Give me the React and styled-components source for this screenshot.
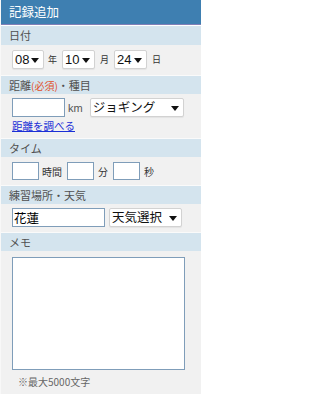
import styled, { createGlobalStyle } from "styled-components";

const GlobalStyle = createGlobalStyle`
  html, body {
    margin: 0;
    padding: 0;
    background: #ffffff;
  }
  body {
    font-family: "Noto Sans CJK JP", "Liberation Sans", sans-serif;
  }
`;

const Panel = styled.div`
  width: 201px;
  height: 394px;
  background: #f1f1f1;
  display: flex;
  flex-direction: column;
  box-sizing: border-box;
  border-left: 1px solid #f8f8f8;
`;

const TitleBar = styled.div`
  height: 24px;
  background: #3e7fb1;
  color: #ffffff;
  font-size: 12.5px;
  line-height: 24px;
  padding-left: 8px;
  border-bottom: 1px solid #7f7fb6;
  box-shadow: 0 1px 0 #ffffff;
  margin-bottom: 1px;
`;

const Header = styled.div`
  box-sizing: border-box;
  height: 19px;
  background: #d4e4ee;
  color: #505050;
  font-size: 11px;
  line-height: 18px;
  padding-left: 8px;
  border-top: ${(p) => (p.$first ? "0" : "1px solid #fafafa")};
`;

const Required = styled.span`
  color: #e0502a;
  font-size: 10px;
`;

const Body = styled.div`
  padding: ${(p) => p.$pad || "5px 0 6px 11px"};
  display: flex;
  flex-direction: column;
  gap: 2px;
`;

const Row = styled.div`
  display: flex;
  align-items: center;
  gap: ${(p) => p.$gap || "0"};
  height: ${(p) => p.$h || 19}px;
`;

const Unit = styled.span`
  font-size: ${(p) => p.$fs || 9}px;
  color: #333333;
  margin: ${(p) => p.$m || "0"};
  white-space: nowrap;
`;

const SelectBox = styled.div`
  box-sizing: border-box;
  width: ${(p) => p.$w}px;
  height: 19px;
  background: #ffffff;
  border: 1px solid #d2d2d2;
  border-radius: 2px;
  box-shadow: 0 1px 1px rgba(0, 0, 0, 0.06);
  display: flex;
  align-items: center;
  justify-content: space-between;
  padding: 0 4px 0 2px;
  font-family: ${(p) =>
    p.$num ? '"Liberation Sans", sans-serif' : '"Noto Sans CJK JP", sans-serif'};
  font-size: ${(p) => p.$fs || 12.5}px;
  color: #111111;
  line-height: 1;
  white-space: nowrap;
  overflow: hidden;
  flex-shrink: 0;
`;

const Arrow = styled.span`
  flex-shrink: 0;
  width: 0;
  height: 0;
  border-left: 4px solid transparent;
  border-right: 4px solid transparent;
  border-top: 5px solid #111111;
  margin-top: 1px;
`;

const Input = styled.div`
  box-sizing: border-box;
  flex-shrink: 0;
  width: ${(p) => p.$w}px;
  height: ${(p) => p.$h || 19}px;
  background: #ffffff;
  border: 1px solid #7f9db9;
  font-size: 12.5px;
  line-height: 17px;
  color: #000000;
  padding-left: 1px;
`;

const Km = styled.span`
  font-family: "Liberation Sans", sans-serif;
  font-size: 11px;
  color: #555555;
  margin: 0 7px 0 3px;
`;

const Link = styled.a`
  font-size: 10.5px;
  color: #1a2fd6;
  text-decoration: underline;
  line-height: 13px;
  align-self: flex-start;
`;

const Memo = styled.div`
  box-sizing: border-box;
  width: 173px;
  height: 113px;
  background: #ffffff;
  border: 1px solid #7f9db9;
  margin-top: 1px;
`;

const Note = styled.div`
  font-size: 10px;
  line-height: 14px;
  color: #666666;
  padding: 3px 0 0 6px;
`;

function Select({ w, children, num, fs }) {
  return (
    <SelectBox $w={w} $num={num} $fs={fs}>
      <span>{children}</span>
      <Arrow />
    </SelectBox>
  );
}

export default function App() {
  return (
    <>
      <GlobalStyle />
      <Panel>
        <TitleBar>記録追加</TitleBar>

        <Header $first>日付</Header>
        <Body $pad="5px 0 6px 11px">
          <Row>
            <Select w={32} num fs={13}>08</Select>
            <Unit $m="0 5px 0 4px">年</Unit>
            <Select w={33} num fs={13}>10</Select>
            <Unit $m="0 5px 0 5px">月</Unit>
            <Select w={33} num fs={13}>24</Select>
            <Unit $m="0 0 0 5px">日</Unit>
          </Row>
        </Body>

        <Header>
          距離<Required>(必須)</Required>・種目
        </Header>
        <Body $pad="4px 0 6px 11px">
          <Row>
            <Input $w={53} />
            <Km>km</Km>
            <Select w={94}>ジョギング</Select>
          </Row>
          <Link>距離を調べる</Link>
        </Body>

        <Header>タイム</Header>
        <Body $pad="5px 0 5px 11px">
          <Row $h={18}>
            <Input $w={27} $h={18} />
            <Unit $fs={10} $m="0 5px 0 3px">時間</Unit>
            <Input $w={27} $h={18} />
            <Unit $fs={10} $m="0 5px 0 4px">分</Unit>
            <Input $w={27} $h={18} />
            <Unit $fs={10} $m="0 0 0 4px">秒</Unit>
          </Row>
        </Body>

        <Header>練習場所・天気</Header>
        <Body $pad="4px 0 5px 11px">
          <Row $gap="4px">
            <Input $w={93}>花蓮</Input>
            <Select w={73}>天気選択</Select>
          </Row>
        </Body>

        <Header>メモ</Header>
        <Body $pad="5px 0 0 11px">
          <Memo />
          <Note>※最大5000文字</Note>
        </Body>
      </Panel>
    </>
  );
}
